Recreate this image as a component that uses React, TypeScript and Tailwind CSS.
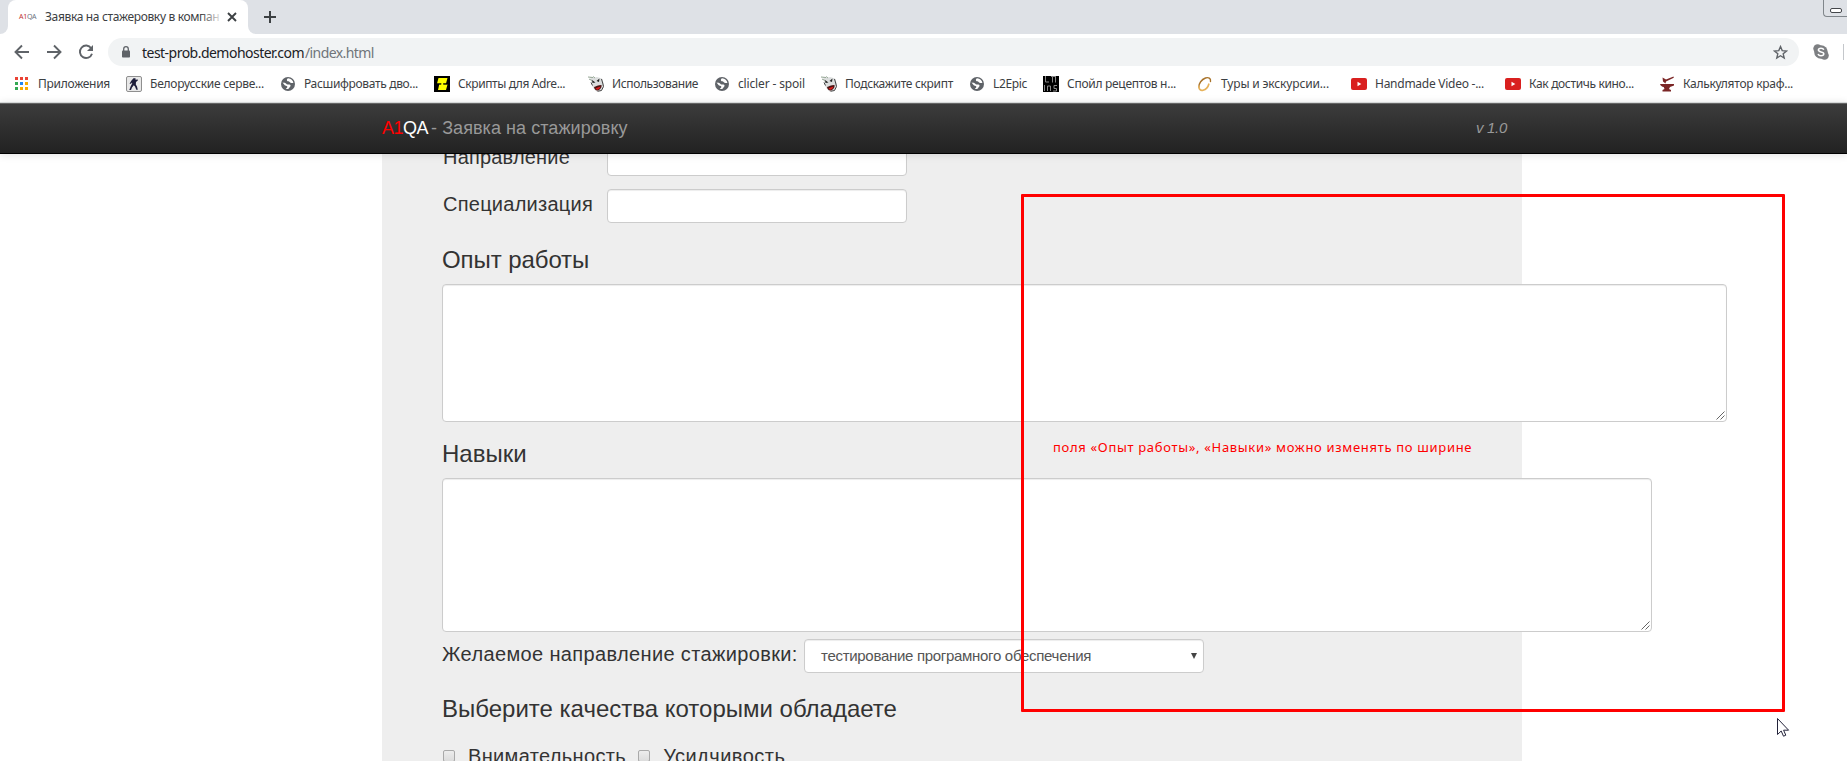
import { ReactNode } from "react";

const ui = "font-['Noto_Sans','Open_Sans',sans-serif]";

const AppsIcon = () => (
  <svg width="16" height="16" viewBox="0 0 16 16" shapeRendering="crispEdges">
    <path d="M2 1h3v3H2zM7 1h3v3H7zM12 1h3v3h-3z" fill="#ea4335" />
    <path d="M2 6h3v3H2zM2 11h3v3H2z" fill="#34a853" />
    <path d="M7 6h3v3H7z" fill="#2086f5" />
    <path d="M12 6h3v3h-3zM7 11h3v3H7zM12 11h3v3h-3z" fill="#f9ab00" />
  </svg>
);

const StrikeIcon = () => (
  <svg width="16" height="16" viewBox="0 0 16 16">
    <rect x="0.5" y="0.5" width="15" height="15" rx="1.5" fill="#e8e8e8" stroke="#8f8f8f" />
    <path d="M7.5 2.2h2v1.6l2.3-.3v1L10 6l-.2 2.500 1.200 2 .8 3.300h-1.500L9 10.500 7.800 9.200 6 11.500 5 14H3.300l1.500-4L6.200 7.500 6 6.500l-1 1.200H3.500L5.300 4.800z" fill="#1d1d3a" />
  </svg>
);

const GlobeIcon = () => (
  <svg width="16" height="16" viewBox="0 0 16 16">
    <circle cx="8" cy="8" r="7" fill="#5f6368" />
    <path d="M2.500 6.500c2 .2 3 .3 3.800 1.300.5.8 1.700.6 3 .8 1.400.2 1.700 1.500.8 2.200-.8.600-.9 1.900-2 2.200-.9.200-1.700 0-2.300-.2.900-.5 1.700-1.400 1.500-2.300C6.900 9.500 5 10 4.500 9z" fill="#fff" />
    <path d="M8 2.300c-1 .8-1.500 1.500-.9 2.500.6.9 1.900.4 2.500 1.200.6.700 1.500 1.200 3.800 1C13.200 4.500 11 2.500 8 2.300z" fill="#fff" />
  </svg>
);

const YellowIcon = () => (
  <svg width="16" height="16" viewBox="0 0 16 16">
    <rect width="16" height="16" fill="#000" />
    <path d="M4.500 2h9L12 7.500H9.500v1h4L12 14H4l1.200-5.500H7v-1H3z" fill="#ff0" />
    <path d="M3 7.900h4.500M9 7.900h4.500" stroke="#000" strokeWidth="0.8" />
  </svg>
);

const FaceIcon = () => (
  <svg width="16" height="16" viewBox="0 0 16 16">
    <path d="M2 1l3 1 4-1 5 1.500L15.500 7l.5 3-2.500 4.500-5 1-2.500-2.500L3.500 9 3 5z" fill="#dcdede" />
    <path d="M0 1l5 .5M1 3l3 1.500M5 .5l2 1.500" stroke="#93a493" />
    <path d="M4 4l3.500 2.500L4.500 7zM8.500 5l3-2.500L11 6z" fill="#222" />
    <path d="M3 6.500l1.500 3M13.500 3l1.200 4 .8 3.500-2 4-4 .8" stroke="#444" fill="none" />
    <path d="M6 11c2-.5 4-2 7.500-2 .5 2-.8 4.500-3 5.200C8 15 6.500 13.500 6 11z" fill="#4a1212" />
    <path d="M7.500 12.500c1-.8 3.500-2 5-1.800-.7 2-2 3-3.500 3z" fill="#d81e1e" />
  </svg>
);

const LinesIcon = () => (
  <svg width="16" height="16" viewBox="0 0 16 16" fill="none" stroke="#8a8a8a">
    <rect width="16" height="16" fill="#000" stroke="none" />
    <path d="M2.500 0v6H6M8 .5h5M9.500 0v6.500M12.500 0v6.500M1.500 9v6M4.500 15v-5h3v5M14 9.500h-3v3h2.500V15H10" />
  </svg>
);

const GoldIcon = () => (
  <svg width="16" height="16" viewBox="0 0 16 16" fill="none" strokeLinecap="round">
    <path d="M13.500 5.500C14 2.200 11.500 1 8.500 2 4.500 3.500 1.700 7.500 1.900 11" stroke="#a9742c" strokeWidth="1.4" />
    <path d="M1.900 10.500c0 3 1.700 4.300 4.100 3.700 2.500-.7 5-3 5.800-6" stroke="#e6b25a" strokeWidth="1.7" />
  </svg>
);

const TubeIcon = () => (
  <svg width="16" height="16" viewBox="0 0 16 16">
    <rect y="2" width="16" height="12" rx="2" fill="#d9201f" />
    <path d="M6.500 5.800v4.400L10.300 8z" fill="#fff" />
  </svg>
);

const AnvilIcon = () => (
  <svg width="16" height="16" viewBox="0 0 16 16" fill="#7b2626">
    <path d="M3.500 1.500l3.500 2 7.500-3 .3 1.300L7 5.500 6.500 7.500 4 5.500zM1 8h14v1.500l-4 1.500-1 2 2 1v1.500H3.500V14l2-1-.8-2C3 10.800 1.500 9.800 1 8z" />
  </svg>
);

type Bookmark = { icon: ReactNode; text: string; box: string; fit: string };

const bookmarks: Bookmark[] = [
  { icon: <AppsIcon />, text: "Приложения", box: "w-[113px]", fit: "ml-px tracking-[-0.27px]" },
  { icon: <StrikeIcon />, text: "Белорусские серве...", box: "w-[154px]", fit: "tracking-[-0.24px]" },
  { icon: <GlobeIcon />, text: "Расшифровать дво...", box: "w-[154px]", fit: "tracking-[-0.336px]" },
  { icon: <YellowIcon />, text: "Скрипты для Adre...", box: "w-[154px]", fit: "tracking-[-0.4px]" },
  { icon: <FaceIcon />, text: "Использование", box: "w-[126px]", fit: "tracking-[-0.37px]" },
  { icon: <GlobeIcon />, text: "clicler - spoil", box: "w-[107px]", fit: "tracking-[-0.15px]" },
  { icon: <FaceIcon />, text: "Подскажите скрипт", box: "w-[148px]", fit: "tracking-[-0.307px]" },
  { icon: <GlobeIcon />, text: "L2Epic", box: "w-[74px]", fit: "tracking-[-0.34px]" },
  { icon: <LinesIcon />, text: "Спойл рецептов н...", box: "w-[154px]", fit: "tracking-[-0.28px]" },
  { icon: <GoldIcon />, text: "Туры и экскурсии...", box: "w-[154px]", fit: "tracking-[-0.15px]" },
  { icon: <TubeIcon />, text: "Handmade Video -...", box: "w-[154px]", fit: "tracking-[-0.26px]" },
  { icon: <TubeIcon />, text: "Как достичь кино...", box: "w-[154px]", fit: "tracking-[-0.35px]" },
  { icon: <AnvilIcon />, text: "Калькулятор краф...", box: "w-[154px]", fit: "tracking-[-0.28px]" },
];

function TabStrip() {
  return (
    <div className={`flex h-[34px] shrink-0 justify-between bg-[#dee1e6] ${ui}`}>
      <div className="flex">
        <div className="flex w-2 items-end bg-white">
          <div className="h-[34px] w-2 rounded-br-[8px] bg-[#dee1e6]" />
        </div>
        <div className="bg-[#dee1e6]">
          <div className="flex h-[34px] w-[240px] items-center rounded-t-[8px] bg-white">
            <span className="ml-[11px] w-[18px] text-[7px] tracking-[-0.3px] text-[#6b7280]">
              <span className="text-[#c03030]">A1</span>QA
            </span>
            <div className="relative ml-[8px] w-[175px] text-[12px] leading-[32px] tracking-[-0.34px] whitespace-nowrap text-[#3c4043]">
              Заявка на стажеровку в компан
              <span className="absolute inset-y-0 -right-1 w-6 bg-linear-to-r from-white/0 to-white" />
            </div>
            <svg className="ml-[7px]" width="10" height="10" viewBox="0 0 10 10" stroke="#3c4043" strokeWidth="1.9">
              <path d="M1 1l8 8M9 1l-8 8" />
            </svg>
          </div>
        </div>
        <div className="flex w-2 items-end bg-white">
          <div className="h-[34px] w-2 rounded-bl-[8px] bg-[#dee1e6]" />
        </div>
        <svg className="ml-[8px] mt-[11px]" width="12" height="12" viewBox="0 0 12 12" stroke="#3c4043" strokeWidth="2">
          <path d="M6 0v12M0 6h12" />
        </svg>
      </div>
      <div className="flex h-[17px] w-[24px] items-end rounded-bl-[4px] border-b border-l border-[#80868b] pb-[3px] pl-[6px]">
        <div className="h-[5px] w-[12px] shrink-0 rounded-[2px] border border-[#44474b] bg-white" />
      </div>
    </div>
  );
}

function Toolbar() {
  return (
    <div className={`flex h-[36px] shrink-0 items-center pl-[14px] ${ui}`}>
      <svg className="shrink-0" width="16" height="16" viewBox="0 0 16 16" fill="none" stroke="#5f6368" strokeWidth="1.9">
        <path d="M15 8H2M8 1.500L1.500 8 8 14.500" />
      </svg>
      <svg className="ml-4 shrink-0" width="16" height="16" viewBox="0 0 16 16" fill="none" stroke="#5f6368" strokeWidth="1.9">
        <path d="M1 8h13M8 1.500L14.500 8 8 14.500" />
      </svg>
      <svg className="ml-4 shrink-0" width="16" height="16" viewBox="0 0 16 16" fill="none" stroke="#5f6368" strokeWidth="1.9">
        <path d="M13.200 4.200A6.200 6.200 0 1 0 14 9.700" />
        <path d="M15 1v6H9z" fill="#5f6368" stroke="none" />
      </svg>
      <div className="ml-[14px] flex h-[28px] w-[1691px] shrink-0 items-center rounded-full bg-[#f1f3f4] pr-[11px] pl-[13px]">
        <svg width="10" height="13" viewBox="0 0 10 13">
          <rect x="1" y="4.5" width="8" height="7" rx="0.8" fill="#5f6368" />
          <path d="M2.700 5V3a2.300 2.300 0 0 1 4.600 0v2" fill="none" stroke="#5f6368" strokeWidth="1.3" />
        </svg>
        <span className="ml-[11px] text-[14px] tracking-[-0.525px] whitespace-nowrap text-[#202124]">test-prob.demohoster.com</span>
        <span className="ml-px text-[14px] tracking-[-0.6px] whitespace-nowrap text-[#70757a]">/index.html</span>
        <svg className="ml-auto" width="15" height="15" viewBox="0 0 15 15" fill="none" stroke="#5f6368" strokeWidth="1.4">
          <path d="M7.500 1.600l1.700 4 4.300.4-3.300 2.800 1 4.200-3.700-2.300L3.800 13l1-4.200L1.500 6l4.300-.4z" />
        </svg>
      </div>
      <svg className="ml-[14px] shrink-0" width="16" height="16" viewBox="0 0 16 16">
        <circle cx="8" cy="8" r="6.8" fill="#7d7f82" />
        <circle cx="4.6" cy="4.6" r="4.3" fill="#7d7f82" />
        <circle cx="11.5" cy="11.5" r="4.3" fill="#7d7f82" />
        <path d="M10.800 5.700C10.300 4.500 9.300 4.200 8 4.200c-1.600 0-2.600.7-2.600 1.900 0 2.600 5.400 1.100 5.400 3.700 0 1.300-1.200 2-2.800 2-1.500 0-2.500-.6-3-1.800" fill="none" stroke="#fff" strokeWidth="1.5" />
      </svg>
      <div className="ml-[14px] h-4 w-px shrink-0 bg-[#c4c7cb]" />
    </div>
  );
}

function BookmarkBar() {
  return (
    <div className={`flex h-[32px] shrink-0 pb-[4px] pl-[13px] text-[12px] text-[#3c4043] ${ui}`}>
      {bookmarks.map((b) => (
        <div key={b.text} className={`flex shrink-0 items-center gap-2 ${b.box}`}>
          {b.icon}
          <span className={`whitespace-nowrap ${b.fit}`}>{b.text}</span>
        </div>
      ))}
    </div>
  );
}

function Navbar() {
  return (
    <div className="z-10 flex h-[52px] shrink-0 flex-col border-t border-b border-t-[#d5d8d8] border-b-black shadow-[0_1px_8px_rgba(0,0,0,0.12)]">
      <div className="flex h-[50px] items-center border-t border-t-[#666] bg-linear-to-b from-[#3c3c3c] to-[#222] pr-[340px] pl-[382px] whitespace-nowrap">
        <span className="text-[18px] tracking-[-0.5px] text-white">
          <span className="text-[#f00]">A1</span>QA
        </span>
        <span className="ml-[3px] text-[18px] tracking-[0.06px] text-[#999]">- Заявка на стажировку</span>
        <span className="ml-auto text-[15px] tracking-[-0.3px] text-[#999] italic">v 1.0</span>
      </div>
    </div>
  );
}

const field = "rounded-[4px] border border-[#ccc] bg-white shadow-[inset_0_1px_1px_rgba(0,0,0,0.075)]";

const TextArea = ({ size }: { size: string }) => (
  <div className={`flex shrink-0 items-end justify-end ${field} ${size}`}>
    <svg width="11" height="11" viewBox="0 0 11 11" stroke="#555" strokeWidth="0.9" fill="none">
      <path d="M1.500 9.500L9.500 1.500M5.500 9.500L9.500 5.500" />
    </svg>
  </div>
);

const Check = () => (
  <span className="mt-[9px] size-3 shrink-0 rounded-[2px] border border-[#a9a9a9] bg-linear-to-b from-[#ededed] to-[#dcdcdc]" />
);

function ApplicationForm() {
  return (
    <div className="-mt-[12px] ml-[382px] h-[660px] w-[1140px] bg-[#eee] pl-[60px] text-[20px] leading-[30px] whitespace-nowrap">
      <div className="flex h-[34px] items-start">
        <span className="w-[165px] pl-px tracking-[0.19px]">Направление</span>
        <div className={`h-[34px] w-[300px] ${field}`} />
      </div>
      <div className="mt-[13px] flex h-[34px] items-start">
        <span className="w-[165px] pl-px tracking-[0.25px]">Специализация</span>
        <div className={`h-[34px] w-[300px] ${field}`} />
      </div>
      <h3 className="mt-[17px] mb-1 h-10 text-[24px] leading-10 tracking-[-0.08px]">Опыт работы</h3>
      <TextArea size="h-[138px] w-[1285px]" />
      <h3 className="mt-3 mb-1 h-10 text-[24px] leading-10">Навыки</h3>
      <TextArea size="h-[154px] w-[1210px]" />
      <div className="mt-[7px] flex h-[34px] items-start">
        <span className="w-[362px] tracking-[0.36px]">Желаемое направление стажировки:</span>
        <div className={`flex h-[34px] w-[400px] items-center justify-between pr-[6px] pl-4 ${field}`}>
          <span className="text-[15px] tracking-[-0.3px] text-[#555]">тестирование програмного обеспечения</span>
          <svg width="6" height="6" viewBox="0 0 6 6" fill="#444">
            <path d="M0 0h6L3 6z" />
          </svg>
        </div>
      </div>
      <h3 className="mt-4 h-10 text-[24px] leading-10">Выберите качества которыми обладаете</h3>
      <div className="mt-3 flex items-start pl-px">
        <Check />
        <span className="ml-[13px] tracking-[0.35px]">Внимательность</span>
        <span className="w-[12px]" />
        <Check />
        <span className="ml-[13px] tracking-[0.48px]">Усидчивость</span>
      </div>
    </div>
  );
}

export default function App() {
  return (
    <div className="relative flex h-[761px] w-[1847px] flex-col overflow-hidden bg-white font-['Liberation_Sans',Arial,sans-serif] text-[#333]">
      <TabStrip />
      <Toolbar />
      <BookmarkBar />
      <Navbar />
      <main className="h-[607px] overflow-hidden">
        <ApplicationForm />
      </main>
      <div className="absolute top-[194px] left-[1021px] z-20 h-[518px] w-[764px] rounded-[1px] border-[3px] border-[#f00]">
        <p className={`mt-[240px] ml-[29px] text-[13px] leading-5 tracking-[0.68px] whitespace-nowrap text-[#f00] ${ui}`}>
          поля «Опыт работы», «Навыки» можно изменять по ширине
        </p>
      </div>
      <svg className="absolute top-[717px] left-[1777px] z-20" width="14" height="21" viewBox="0 0 14 21">
        <path d="M.5 1.500v16l3.700-3.500 2.300 5.200 2.300-1-2.200-5h5z" fill="#fff" stroke="#23233a" strokeWidth="1" />
      </svg>
    </div>
  );
}
